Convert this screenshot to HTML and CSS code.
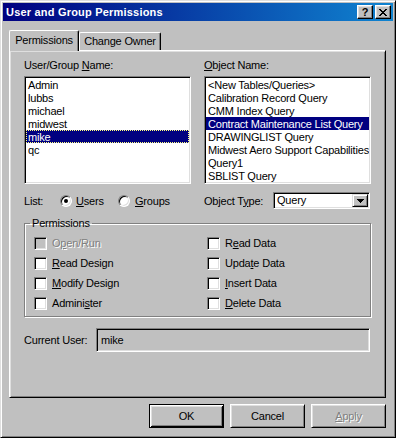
FILE: index.html
```html
<!DOCTYPE html>
<html>
<head>
<meta charset="utf-8">
<title>User and Group Permissions</title>
<link rel="stylesheet" href="styles.css">
</head>
<body>
<div class="window">
  <div class="titlebar">
    <span class="title">User and Group Permissions</span>
    <div class="tb-btns">
      <span class="tbtn help">?</span>
      <span class="tbtn close">
        <svg width="8" height="7" viewBox="0 0 8 7" shape-rendering="crispEdges">
          <path fill="#000" d="M0 0h2v1H0zM6 0h2v1H6zM1 1h2v1H1zM5 1h2v1H5zM2 2h4v1H2zM3 3h2v1H3zM2 4h4v1H2zM1 5h2v1H1zM5 5h2v1H5zM0 6h2v1H0zM6 6h2v1H6z"/>
        </svg>
      </span>
    </div>
  </div>
  <div class="body">
    <div class="tabs">
      <div class="tab sel">Permissions</div>
      <div class="tab other">Change Owner</div>
    </div>
    <div class="panel">
      <div class="cols lists">
        <div class="col">
          <div class="label">User/Group <u>N</u>ame:</div>
          <div class="listbox">
            <div class="item">Admin</div>
            <div class="item">lubbs</div>
            <div class="item">michael</div>
            <div class="item">midwest</div>
            <div class="item selected focus">mike</div>
            <div class="item">qc</div>
          </div>
        </div>
        <div class="col">
          <div class="label"><u>O</u>bject Name:</div>
          <div class="listbox">
            <div class="item">&lt;New Tables/Queries&gt;</div>
            <div class="item">Calibration Record Query</div>
            <div class="item">CMM Index Query</div>
            <div class="item selected">Contract Maintenance List Query</div>
            <div class="item">DRAWINGLIST Query</div>
            <div class="item">Midwest Aero Support Capabilities</div>
            <div class="item">Query1</div>
            <div class="item">SBLIST Query</div>
          </div>
        </div>
      </div>
      <div class="cols options">
        <div class="opt-left">
          <span class="list-label">List:</span>
          <span class="radio-item users"><span class="radio checked"></span><span><u>U</u>sers</span></span>
          <span class="radio-item groups"><span class="radio"></span><span><u>G</u>roups</span></span>
        </div>
        <div class="opt-right">
          <span class="type-label">Object T<u>y</u>pe:</span>
          <div class="combo">
            <span class="combo-text">Query</span>
            <span class="combo-btn">
              <svg width="7" height="4" viewBox="0 0 7 4" shape-rendering="crispEdges">
                <path fill="#000" d="M0 0h7v1H0zM1 1h5v1H1zM2 2h3v1H2zM3 3h1v1H3z"/>
              </svg>
            </span>
          </div>
        </div>
      </div>
      <fieldset class="group">
        <legend>Permissions</legend>
        <div class="checks">
          <label class="check disabled"><span class="box"></span><span class="txt">O<u>p</u>en/Run</span></label>
          <label class="check"><span class="box"></span><span class="txt"><u>R</u>ead Design</span></label>
          <label class="check"><span class="box"></span><span class="txt"><u>M</u>odify Design</span></label>
          <label class="check"><span class="box"></span><span class="txt">Admini<u>s</u>ter</span></label>
          <label class="check"><span class="box"></span><span class="txt">R<u>e</u>ad Data</span></label>
          <label class="check"><span class="box"></span><span class="txt">Upda<u>t</u>e Data</span></label>
          <label class="check"><span class="box"></span><span class="txt"><u>I</u>nsert Data</span></label>
          <label class="check"><span class="box"></span><span class="txt"><u>D</u>elete Data</span></label>
        </div>
      </fieldset>
      <div class="current">
        <span class="cur-label">Current User:</span>
        <div class="field">mike</div>
      </div>
    </div>
    <div class="buttons">
      <div class="btn default">OK</div>
      <div class="btn">Cancel</div>
      <div class="btn disabled"><u>A</u>pply</div>
    </div>
  </div>
</div>
</body>
</html>
```
FILE: styles.css
```css
* { box-sizing: border-box; }
html, body { margin: 0; padding: 0; }
body {
  width: 396px;
  height: 438px;
  overflow: hidden;
  background: #c0c0c0;
  font-family: "Liberation Sans", Arial, sans-serif;
  font-size: 11px;
  letter-spacing: -0.2px;
  color: #000;
}
u { text-decoration: underline; text-underline-offset: 1px; }

.window {
  width: 396px;
  height: 438px;
  border: 1px solid;
  border-color: #dfdfdf #000 #000 #dfdfdf;
  box-shadow: inset 1px 1px #fff, inset -1px -1px #808080;
  padding: 2px;
  display: flex;
  flex-direction: column;
  background: #c0c0c0;
}

.titlebar {
  height: 18px;
  flex: none;
  display: flex;
  align-items: center;
  justify-content: space-between;
  padding: 0 2px 0 3px;
  background: linear-gradient(to right, #000080, #1084d0);
}
.title {
  color: #fff;
  font-weight: bold;
  letter-spacing: 0.2px;
  line-height: 14px;
}
.tb-btns { display: flex; gap: 2px; }
.tbtn {
  width: 16px;
  height: 14px;
  display: flex;
  align-items: center;
  justify-content: center;
  background: #c0c0c0;
  border: 1px solid;
  border-color: #fff #000 #000 #fff;
  box-shadow: inset -1px -1px #808080, inset 1px 1px #dfdfdf;
}
.tbtn.help {
  font-weight: bold;
  font-size: 11px;
  line-height: 12px;
  letter-spacing: 0;
}
.tbtn svg { display: block; }

.body {
  flex: 1;
  display: flex;
  flex-direction: column;
  padding: 9px 7px 7px 6px;
}

.tabs {
  height: 20px;
  display: flex;
  align-items: flex-start;
  position: relative;
  z-index: 1;
}
.tab {
  border: 1px solid;
  border-bottom: none;
  border-color: #fff #000 #000 #fff;
  box-shadow: inset -1px 0 #808080;
  border-radius: 2px 2px 0 0;
  background: #c0c0c0;
  line-height: 13px;
  text-align: center;
  white-space: nowrap;
}
.tab.sel {
  width: 70px;
  height: 21px;
  padding-top: 3px;
}
.tab.other {
  width: 82px;
  height: 18px;
  margin-top: 2px;
  padding-top: 2px;
}

.panel {
  height: 348px;
  flex: none;
  border: 1px solid;
  border-color: #fff #000 #000 #fff;
  box-shadow: inset 1px 1px #dfdfdf, inset -1px -1px #808080;
  padding: 8px 0 0 14px;
}

.cols {
  display: grid;
  grid-template-columns: 167px 167px;
  column-gap: 13px;
}
.label {
  line-height: 13px;
  margin-bottom: 4px;
  white-space: nowrap;
}
.listbox {
  height: 108px;
  background: #fff;
  border: 1px solid;
  border-color: #808080 #fff #fff #808080;
  box-shadow: inset 1px 1px #000, inset -1px -1px #dfdfdf;
  padding: 1px;
  overflow: hidden;
}
.item {
  height: 13px;
  line-height: 12px;
  padding: 1px 0 0 2px;
  white-space: nowrap;
  overflow: hidden;
}
.item.selected {
  background: #000080;
  color: #fff;
}
.item.focus {
  outline: 1px dotted #ffff80;
  outline-offset: -1px;
}

.options {
  margin-top: 8px;
  height: 17px;
}
.opt-left, .opt-right {
  display: flex;
  align-items: center;
  white-space: nowrap;
}
.list-label { width: 36px; }
.radio-item {
  display: flex;
  align-items: center;
  gap: 4px;
}
.radio-item.users { width: 58px; }
.radio-item.groups { gap: 5px; }
.radio {
  width: 12px;
  height: 12px;
  border-radius: 50%;
  background: #fff;
  border: 1px solid;
  border-color: #808080 #fff #fff #808080;
  box-shadow: inset 1px 1px #000, inset -1px -1px #dfdfdf;
  display: flex;
  align-items: center;
  justify-content: center;
}
.radio.checked::after {
  content: "";
  width: 4px;
  height: 4px;
  border-radius: 50%;
  background: #000;
}
.type-label { width: 69px; }
.combo {
  width: 97px;
  height: 17px;
  background: #fff;
  border: 1px solid;
  border-color: #808080 #fff #fff #808080;
  box-shadow: inset 1px 1px #000, inset -1px -1px #dfdfdf;
  padding: 1px;
  display: flex;
  align-items: center;
  justify-content: space-between;
}
.combo-text { padding-left: 2px; line-height: 13px; }
.combo-btn {
  width: 16px;
  height: 13px;
  background: #c0c0c0;
  border: 1px solid;
  border-color: #dfdfdf #000 #000 #dfdfdf;
  box-shadow: inset 1px 1px #fff, inset -1px -1px #808080;
  display: flex;
  align-items: center;
  justify-content: center;
}
.combo-btn svg { display: block; }

.group {
  margin: 7px 0 0 0;
  width: 347px;
  height: 101px;
  border: 1px solid #808080;
  box-shadow: inset 1px 1px #fff, 1px 1px #fff;
  padding: 0 0 0 9px;
  min-inline-size: 0;
}
.group legend {
  padding: 0 2px;
  margin-left: -4px;
  line-height: 14px;
}
.checks {
  margin-top: 3px;
  display: grid;
  grid-template-columns: 173px auto;
  grid-template-rows: repeat(4, 20px);
  grid-auto-flow: column;
}
.check {
  display: flex;
  align-items: center;
  gap: 5px;
  white-space: nowrap;
}
.box {
  width: 13px;
  height: 13px;
  flex: none;
  background: #fff;
  border: 1px solid;
  border-color: #808080 #fff #fff #808080;
  box-shadow: inset 1px 1px #000, inset -1px -1px #dfdfdf;
}
.check.disabled .box { background: #c0c0c0; }
.check.disabled .txt,
.btn.disabled {
  color: #808080;
  text-shadow: 1px 1px #fff;
}

.current {
  margin-top: 11px;
  height: 24px;
  display: flex;
  align-items: center;
}
.cur-label { width: 72px; white-space: nowrap; }
.field {
  width: 274px;
  height: 24px;
  border: 1px solid;
  border-color: #808080 #fff #fff #808080;
  box-shadow: inset 1px 1px #000, inset -1px -1px #dfdfdf;
  padding-left: 4px;
  display: flex;
  align-items: center;
  background: #c0c0c0;
}

.buttons {
  margin-top: 6px;
  display: flex;
  justify-content: flex-end;
  gap: 6px;
}
.btn {
  width: 75px;
  height: 24px;
  display: flex;
  align-items: center;
  justify-content: center;
  background: #c0c0c0;
  border: 1px solid;
  border-color: #fff #000 #000 #fff;
  box-shadow: inset 1px 1px #dfdfdf, inset -1px -1px #808080;
}
.btn.default {
  border-color: #000;
  box-shadow: inset 1px 1px #fff, inset -1px -1px #000, inset 2px 2px #dfdfdf, inset -2px -2px #808080;
}
```
